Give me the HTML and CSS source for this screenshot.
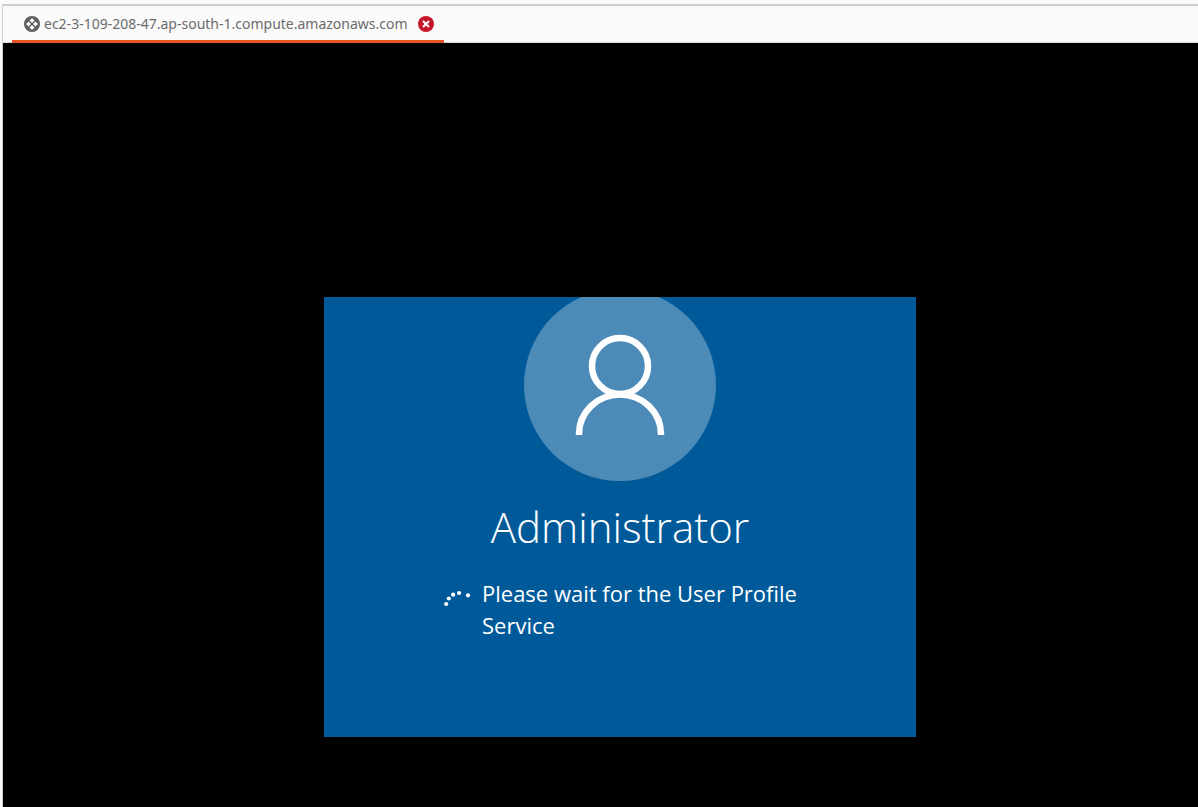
FILE: index.html
```html
<!DOCTYPE html>
<html lang="en">
<head>
<meta charset="utf-8">
<meta name="viewport" content="width=device-width, initial-scale=1">
<title>Remote desktop</title>
<link rel="stylesheet" href="styles.css">
</head>
<body>
<div class="notebook">
  <header class="tab-bar">
    <div class="tab">
      <svg class="tab-icon" viewBox="0 0 16 16" aria-hidden="true">
        <circle cx="8" cy="8" r="8" fill="#5e5e5e"/>
        <g fill="#fafafa">
          <path d="M8 2 10.500 4.500 8 7 5.500 4.500z"/>
          <path d="M8 9 10.500 11.500 8 14 5.500 11.500z"/>
          <path d="M4.500 5.500 7 8 4.500 10.500 2 8z"/>
          <path d="M11.500 5.500 14 8 11.500 10.500 9 8z"/>
        </g>
      </svg>
      <span class="tab-title">ec2-3-109-208-47.ap-south-1.compute.amazonaws.com</span>
      <button class="tab-close" type="button" aria-label="Close tab">
        <svg class="close-icon" viewBox="0 0 16 16" aria-hidden="true">
          <circle cx="8" cy="8" r="8" fill="#c7162b"/>
          <path d="m5 5 6 6m0-6-6 6" stroke="#fff" stroke-width="2"/>
        </svg>
      </button>
    </div>
  </header>
  <main class="screen">
    <section class="login">
      <svg class="avatar" viewBox="0 0 192 184" aria-hidden="true">
        <circle cx="96" cy="88" r="96" fill="#4c8bb8"/>
        <g fill="none" stroke="#fff" stroke-width="6.500">
          <circle cx="96" cy="69" r="28"/>
          <path d="M55 138v-1a41 39.500 0 0 1 82 0v1"/>
        </g>
      </svg>
      <h1 class="user-name">Administrator</h1>
      <div class="status">
        <svg class="spinner" viewBox="0 0 28 20" aria-hidden="true">
          <g fill="#fff">
            <circle cx="2.200" cy="16" r="2.100"/>
            <circle cx="4.800" cy="10.500" r="2.100"/>
            <circle cx="9.200" cy="6.700" r="2.100"/>
            <circle cx="15.100" cy="5" r="2.100"/>
            <circle cx="24" cy="7.300" r="2.100"/>
          </g>
        </svg>
        <p class="status-text">Please wait for the User Profile Service</p>
      </div>
    </section>
  </main>
</div>
</body>
</html>
```
FILE: styles.css
```css
* {
  box-sizing: border-box;
}

body {
  margin: 0;
  padding: 4px 0 0 2px;
  background: #fafafa;
  font-family: "Open Sans", "Noto Sans", sans-serif;
}

.notebook {
  display: flex;
  flex-direction: column;
  min-height: calc(100vh - 4px);
  border-top: 2px solid #cdcdcd;
  border-left: 1px solid #cdcdcd;
}

.tab-bar {
  display: flex;
  padding-left: 9px;
  background: #fafafa;
  box-shadow: inset 0 -1px #d8d8d8;
}

.tab {
  display: flex;
  align-items: center;
  height: 37px;
  padding: 2px 10px 0 12px;
  border-bottom: 3px solid #e95420;
}

.tab-icon,
.close-icon {
  display: block;
  width: 16px;
  height: 16px;
}

.tab-title {
  margin: 0 10px 0 4px;
  color: #6b6b6b;
  font-family: "Noto Sans", "Open Sans", sans-serif;
  font-size: 14px;
  line-height: 20px;
  white-space: nowrap;
}

.tab-close {
  padding: 0;
  border: 0;
  background: none;
}

.screen {
  display: flex;
  flex: 1;
  justify-content: center;
  align-items: flex-start;
  padding: 254px 0 70px 39px;
  background: #000;
}

.login {
  display: flex;
  flex-direction: column;
  align-items: center;
  width: 592px;
  padding-bottom: 96px;
  background: #005a9a;
  color: #fff;
}

.avatar {
  display: block;
  width: 192px;
  height: 184px;
}

.user-name {
  margin: 16px 0 20px;
  font-size: 42px;
  font-weight: 300;
  line-height: 60px;
}

.status {
  display: flex;
  gap: 10px;
  width: 384px;
  padding-left: 16px;
}

.spinner {
  flex: none;
  width: 28px;
  height: 20px;
  margin-top: 11px;
}

.status-text {
  margin: 0;
  font-size: 22px;
  line-height: 32px;
}
```
